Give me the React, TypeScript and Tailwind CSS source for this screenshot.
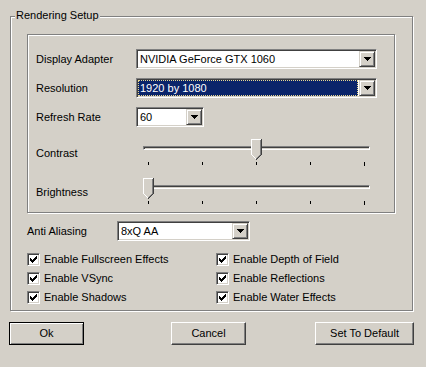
const sunken =
  "border border-t-[#808080] border-l-[#808080] border-b-white border-r-white shadow-[inset_1px_1px_0_#404040,inset_-1px_-1px_0_#d4d0c8]"

const Arrow = () => (
  <svg width="7" height="4" viewBox="0 0 7 4" shapeRendering="crispEdges">
    <rect x="0" y="0" width="7" height="1" fill="#000" />
    <rect x="1" y="1" width="5" height="1" fill="#000" />
    <rect x="2" y="2" width="3" height="1" fill="#000" />
    <rect x="3" y="3" width="1" height="1" fill="#000" />
  </svg>
)

const Combo = ({ value, width, selected }: { value: string; width: string; selected?: boolean }) => (
  <div className={`flex h-[20px] ${width} bg-white p-[1px] ${sunken}`}>
    <div className="flex min-w-0 flex-1 items-center pr-[1px]">
      {selected ? (
        <div className="flex h-full w-full items-center border border-dotted border-[#e8d890] bg-[#0a246a] pl-[1px] text-white">
          {value}
        </div>
      ) : (
        <div className="pl-[2px] text-black">{value}</div>
      )}
    </div>
    <div className="flex h-full w-[16px] shrink-0 items-center justify-center border border-t-[#d4d0c8] border-l-[#d4d0c8] border-b-[#404040] border-r-[#404040] bg-[#d4d0c8] shadow-[inset_1px_1px_0_#fff,inset_-1px_-1px_0_#808080]">
      <Arrow />
    </div>
  </div>
)

const Thumb = () => (
  <svg width="11" height="21" viewBox="0 0 11 21" shapeRendering="crispEdges">
    <polygon points="0,0 11,0 11,16 5.5,21 0,16" fill="#d4d0c8" />
    <rect x="0" y="0" width="10" height="1" fill="#fff" />
    <rect x="0" y="0" width="1" height="16" fill="#fff" />
    <rect x="1" y="16" width="1" height="1" fill="#fff" />
    <rect x="2" y="17" width="1" height="1" fill="#fff" />
    <rect x="3" y="18" width="1" height="1" fill="#fff" />
    <rect x="4" y="19" width="1" height="1" fill="#fff" />
    <rect x="10" y="0" width="1" height="16" fill="#404040" />
    <rect x="9" y="1" width="1" height="15" fill="#808080" />
    <rect x="9" y="16" width="1" height="1" fill="#404040" />
    <rect x="8" y="17" width="1" height="1" fill="#404040" />
    <rect x="7" y="18" width="1" height="1" fill="#404040" />
    <rect x="6" y="19" width="1" height="1" fill="#404040" />
    <rect x="5" y="20" width="1" height="1" fill="#404040" />
    <rect x="8" y="16" width="1" height="1" fill="#808080" />
    <rect x="7" y="17" width="1" height="1" fill="#808080" />
    <rect x="6" y="18" width="1" height="1" fill="#808080" />
    <rect x="5" y="19" width="1" height="1" fill="#808080" />
  </svg>
)

const ticks = [5, 59, 113, 167, 221]

const Slider = ({ pos }: { pos: number }) => (
  <div className="relative h-[28px] w-[227px]">
    <div className="absolute left-0 right-0 top-[7px] h-[4px] border border-t-[#808080] border-l-[#808080] border-b-white border-r-white bg-[#d4d0c8] shadow-[inset_1px_1px_0_#404040]" />
    {ticks.map((t, i) => (
      <div
        key={t}
        className={`absolute top-[23px] w-[1px] bg-black ${i === ticks.length - 1 ? "h-[4px]" : "h-[3px]"}`}
        style={{ left: t }}
      />
    ))}
    <div className="absolute top-0" style={{ left: ticks[pos] - 5 }}>
      <Thumb />
    </div>
  </div>
)

const Check = ({ label }: { label: string }) => (
  <div className="flex h-[13px] items-center">
    <div className={`flex h-[13px] w-[13px] shrink-0 items-center justify-center bg-white ${sunken}`}>
      <svg width="7" height="7" viewBox="0 0 7 7" shapeRendering="crispEdges">
        <rect x="6" y="0" width="1" height="3" fill="#000" />
        <rect x="5" y="1" width="1" height="3" fill="#000" />
        <rect x="4" y="2" width="1" height="3" fill="#000" />
        <rect x="3" y="3" width="1" height="3" fill="#000" />
        <rect x="2" y="4" width="1" height="3" fill="#000" />
        <rect x="1" y="3" width="1" height="3" fill="#000" />
        <rect x="0" y="2" width="1" height="3" fill="#000" />
      </svg>
    </div>
    <span className="ml-[4px] whitespace-nowrap text-black">{label}</span>
  </div>
)

const Button = ({ label, width, isDefault }: { label: string; width: string; isDefault?: boolean }) => (
  <div
    className={`flex h-[23px] ${width} items-center justify-center bg-[#d4d0c8] text-black ${
      isDefault
        ? "border border-black shadow-[inset_1px_1px_0_#fff,inset_-1px_-1px_0_#808080]"
        : "border border-t-white border-l-white border-b-[#404040] border-r-[#404040] shadow-[inset_-1px_-1px_0_#808080]"
    }`}
  >
    {label}
  </div>
)

export default function App() {
  return (
    <div className="h-[367px] w-[426px] overflow-hidden bg-[#d4d0c8] font-['Liberation_Sans',Arial,sans-serif] text-[11px] leading-[13px] text-black">
      <div className="relative ml-[10px] mt-[16px] h-[295px] w-[403px] border border-[#808080] shadow-[inset_1px_1px_0_#fff,1px_1px_0_#fff]">
        <div className="absolute left-[4px] top-[-8px] bg-[#d4d0c8] px-[1px]">Rendering Setup</div>

        <div className="ml-[16px] mt-[17px] h-[179px] w-[368px] border border-[#808080] shadow-[inset_1px_1px_0_#fff,1px_1px_0_#fff]">
          <div className="mt-[14px] flex items-center">
            <div className="w-[108px] pl-[8px]">Display Adapter</div>
            <Combo value="NVIDIA GeForce GTX 1060" width="w-[241px]" />
          </div>
          <div className="mt-[9px] flex items-center">
            <div className="w-[108px] pl-[8px]">Resolution</div>
            <Combo value="1920 by 1080" width="w-[241px]" selected />
          </div>
          <div className="mt-[9px] flex items-center">
            <div className="w-[108px] pl-[8px]">Refresh Rate</div>
            <Combo value="60" width="w-[68px]" />
          </div>
          <div className="mt-[12px] flex items-center">
            <div className="w-[115px] pl-[8px]">Contrast</div>
            <Slider pos={2} />
          </div>
          <div className="mt-[11px] flex items-center">
            <div className="w-[115px] pl-[8px]">Brightness</div>
            <Slider pos={0} />
          </div>
        </div>

        <div className="ml-[16px] mt-[8px] flex items-center">
          <div className="w-[90px]">Anti Aliasing</div>
          <Combo value="8xQ AA" width="w-[133px]" />
        </div>

        <div className="ml-[16px] mt-[12px] grid w-[380px] grid-cols-[189px_1fr] gap-y-[6px]">
          <Check label="Enable Fullscreen Effects" />
          <Check label="Enable Depth of Field" />
          <Check label="Enable VSync" />
          <Check label="Enable Reflections" />
          <Check label="Enable Shadows" />
          <Check label="Enable Water Effects" />
        </div>
      </div>

      <div className="ml-[9px] mt-[11px] flex">
        <Button label="Ok" width="w-[75px]" isDefault />
        <div className="ml-[87px]">
          <Button label="Cancel" width="w-[75px]" />
        </div>
        <div className="ml-[69px]">
          <Button label="Set To Default" width="w-[99px]" />
        </div>
      </div>
    </div>
  )
}
